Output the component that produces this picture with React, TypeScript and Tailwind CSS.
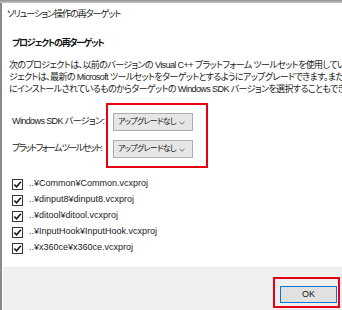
import React from 'react';

const jp = "font-['Liberation_Sans','Noto_Sans_CJK_JP',sans-serif] [font-feature-settings:'palt']";

const projects = [
  '..¥Common¥Common.vcxproj',
  '..¥dinput8¥dinput8.vcxproj',
  '..¥ditool¥ditool.vcxproj',
  '..¥InputHook¥InputHook.vcxproj',
  '..¥x360ce¥x360ce.vcxproj',
];

const lines = [
  '次のプロジェクトは、以前のバージョンの Visual C++ プラットフォーム ツールセットを使用しています。プロ',
  'ジェクトは、最新の Microsoft ツールセットをターゲットとするようにアップグレードできます。また、このコン',
  'にインストールされているものからターゲットの Windows SDK バージョンを選択することもできます。',
];

const Dropdown: React.FC = () => (
  <div className="shrink-0 flex items-center justify-between w-[80px] h-[18px] pl-[4px] pr-[7px] bg-[#e6e6e6] border border-[#adadad] text-[8px] tracking-[-0.7px] text-[#1a1a1a] whitespace-nowrap">
    <span>アップグレードなし</span>
    <svg width="6" height="4" viewBox="0 0 6 4" className="mt-[1px] shrink-0">
      <path d="M0.5 0.8 L3 3.2 L5.5 0.8" fill="none" stroke="#707070" strokeWidth="1" />
    </svg>
  </div>
);

const CheckBox: React.FC = () => (
  <div className="shrink-0 w-[11px] h-[11px] border border-[#333] bg-white flex items-center justify-center">
    <svg width="9" height="9" viewBox="0 0 9 9">
      <path d="M1.3 4.5 L3.6 6.8 L7.8 1.8" fill="none" stroke="#111" strokeWidth="1.5" />
    </svg>
  </div>
);

export default function App() {
  return (
    <div className={`relative w-[342px] h-[310px] overflow-hidden bg-white ${jp}`}>
      <div className="h-[3px] bg-gradient-to-b from-[#8f8f8f] to-[#c8c8c8]" />
      <div className="flex h-[307px]">
        <div className="w-[2px] shrink-0 bg-[#8a8a8a]" />
        <div className="flex-1 min-w-0 flex flex-col">
          <div className="shrink-0 h-[24px] flex items-center pl-[5px] text-[9px] tracking-[-1px] text-[#222] whitespace-nowrap">
            ソリューション操作の再ターゲット
          </div>
          <div className="shrink-0 mt-[9px] h-[16px] flex items-center pl-[10px] text-[9px] font-bold tracking-[-1.3px] text-[#111] whitespace-nowrap">
            プロジェクトの再ターゲット
          </div>
          <div className="shrink-0 mt-[7px] pl-[7px] text-[9px] leading-[12px] tracking-[-0.6px] text-[#1a1a1a] whitespace-nowrap overflow-hidden">
            {lines.map((l) => (
              <div key={l}>{l}</div>
            ))}
          </div>
          <div className="shrink-0 mt-[18px] flex flex-col gap-[9px] pl-[10px]">
            <div className="flex items-center">
              <div className="shrink-0 w-[101px] text-[9px] tracking-[-0.6px] text-[#1a1a1a] whitespace-nowrap overflow-hidden">Windows SDK バージョン:</div>
              <Dropdown />
            </div>
            <div className="flex items-center">
              <div className="shrink-0 w-[101px] text-[9px] tracking-[-1.6px] text-[#1a1a1a] whitespace-nowrap overflow-hidden">プラットフォーム ツールセット:</div>
              <Dropdown />
            </div>
          </div>
          <div className="shrink-0 mt-[18px] flex flex-col pl-[10px]">
            {projects.map((p) => (
              <div key={p} className="h-[16px] flex items-center gap-[6px]">
                <CheckBox />
                <span className="text-[9px] text-[#1a1a1a] whitespace-nowrap">{p}</span>
              </div>
            ))}
          </div>
          <div className="shrink-0 mt-auto h-[43px] ml-[1px] bg-[#f0f0f0] flex justify-end items-start pt-[19px] pr-[5px]">
            <div className="w-[57px] h-[17px] bg-[#e1e1e1] border border-[#0078d7] flex items-center justify-center text-[9px] text-[#111]">
              OK
            </div>
          </div>
        </div>
      </div>
      <div className="absolute left-[106px] top-[103px] w-[102px] h-[65px] border-2 border-[#e60012]" />
      <div className="absolute left-[273px] top-[277px] w-[67px] h-[31px] border-2 border-[#e60012]" />
    </div>
  );
}
